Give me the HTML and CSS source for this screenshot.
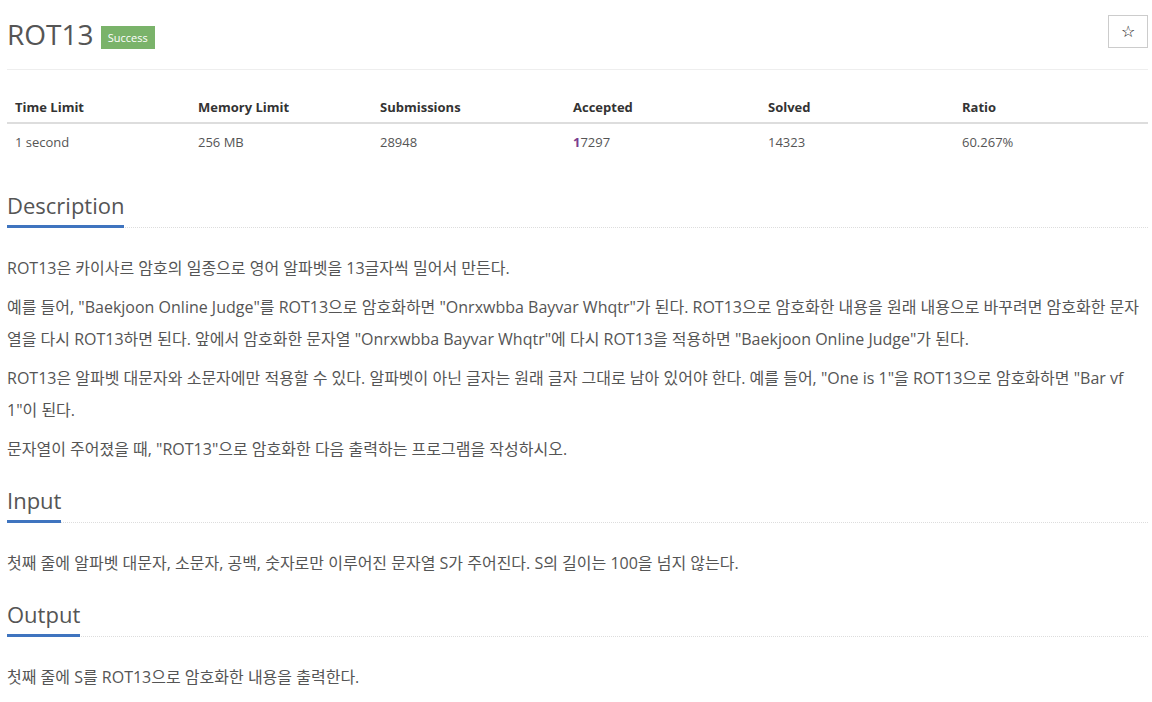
FILE: index.html
```html
<!DOCTYPE html>
<html>
<head>
    <meta charset="utf-8">
    <title>ROT13</title>
    <link rel="stylesheet" href="styles.css">
</head>
<body>
    <div class="page">
        <div class="page-header">
            <h1>ROT13 <span class="badge">Success</span></h1>
            <button class="star-btn">&#9734;</button>
        </div>

        <table class="info-table">
            <tr>
                <th class="c1">Time Limit</th>
                <th class="c2">Memory Limit</th>
                <th class="c3">Submissions</th>
                <th class="c4">Accepted</th>
                <th class="c5">Solved</th>
                <th>Ratio</th>
            </tr>
            <tr>
                <td>1 second</td>
                <td>256 MB</td>
                <td>28948</td>
                <td><b class="mark">1</b>7297</td>
                <td>14323</td>
                <td>60.267%</td>
            </tr>
        </table>

        <section class="problem-section first">
            <div class="headline"><h2>Description</h2></div>
            <p>ROT13은 카이사르 암호의 일종으로 영어 알파벳을 13글자씩 밀어서 만든다.</p>
            <p>예를 들어, "Baekjoon Online Judge"를 ROT13으로 암호화하면 "Onrxwbba Bayvar Whqtr"가 된다. ROT13으로 암호화한 내용을 원래 내용으로 바꾸려면 암호화한 문자열을 다시 ROT13하면 된다. 앞에서 암호화한 문자열 "Onrxwbba Bayvar Whqtr"에 다시 ROT13을 적용하면 "Baekjoon Online Judge"가 된다.</p>
            <p>ROT13은 알파벳 대문자와 소문자에만 적용할 수 있다. 알파벳이 아닌 글자는 원래 글자 그대로 남아 있어야 한다. 예를 들어, "One is 1"을 ROT13으로 암호화하면 "Bar vf 1"이 된다.</p>
            <p>문자열이 주어졌을 때, "ROT13"으로 암호화한 다음 출력하는 프로그램을 작성하시오.</p>
        </section>

        <section class="problem-section">
            <div class="headline"><h2>Input</h2></div>
            <p>첫째 줄에 알파벳 대문자, 소문자, 공백, 숫자로만 이루어진 문자열 S가 주어진다. S의 길이는 100을 넘지 않는다.</p>
        </section>

        <section class="problem-section">
            <div class="headline"><h2>Output</h2></div>
            <p>첫째 줄에 S를 ROT13으로 암호화한 내용을 출력한다.</p>
        </section>
    </div>
</body>
</html>
```

FILE: styles.css
```css
body {
    margin: 0;
    font-family: "Open Sans", "Noto Sans CJK KR", sans-serif;
    color: #555;
    background: #fff;
}

.page {
    padding: 0 4px 0 7px;
}

.page-header {
    display: flex;
    justify-content: space-between;
    align-items: flex-start;
    padding-top: 16px;
    padding-bottom: 17px;
    border-bottom: 1px solid #eee;
}

h1 {
    margin: 0;
    font-size: 28px;
    font-weight: 400;
    line-height: 36px;
    color: #555;
}

.badge {
    display: inline-block;
    vertical-align: 3px;
    background: #7ab36a;
    color: #fff;
    font-size: 11px;
    line-height: 23px;
    padding: 0 7px;
}

.star-btn {
    width: 40px;
    height: 33px;
    margin-top: -1px;
    background: #fff;
    border: 1px solid #ccc;
    font-size: 16px;
    color: #111;
    padding: 0;
}

.info-table {
    width: 100%;
    border-collapse: collapse;
    margin-top: 19px;
    font-size: 13px;
}

.info-table th,
.info-table td {
    text-align: left;
    padding: 8px;
    line-height: 20px;
}

.info-table th {
    font-weight: 700;
    color: #333;
    padding-bottom: 5px;
    border-bottom: 2px solid #ddd;
}

.info-table td {
    color: #555;
}

.info-table .c1 { width: 167px; }
.info-table .c2 { width: 166px; }
.info-table .c3 { width: 177px; }
.info-table .c4 { width: 179px; }
.info-table .c5 { width: 178px; }

.mark {
    color: #7a3d8e;
}

.problem-section {
    margin-top: 20px;
}

.problem-section.first {
    margin-top: 30px;
}

.headline {
    border-bottom: 1px dotted #ddd;
    margin-bottom: 24px;
}

h2 {
    display: inline-block;
    margin: 0 0 -1px;
    padding-bottom: 5px;
    font-size: 22px;
    font-weight: 400;
    line-height: 30px;
    color: #555;
    border-bottom: 3px solid #3f74bf;
}

p {
    margin: 0 0 7px;
    font-size: 16px;
    line-height: 32px;
}
```
